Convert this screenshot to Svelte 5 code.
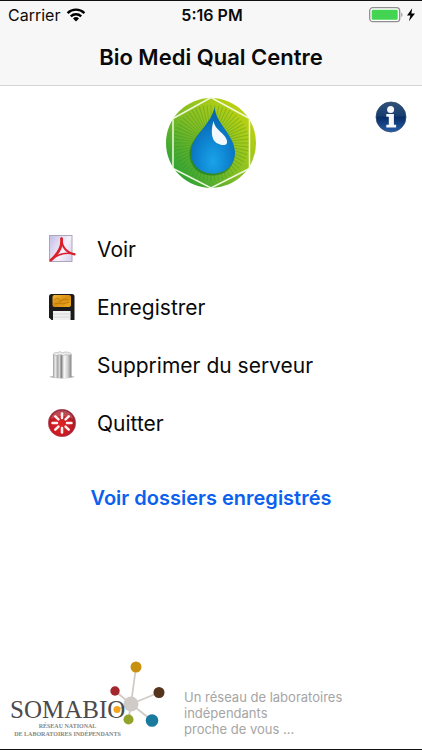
<script>
  const rays = Array.from({ length: 60 }, (_, i) => i * 6);
  const spokes = Array.from({ length: 8 }, (_, i) => i * 45);
  const items = [
    { id: 'pdf', label: 'Voir' },
    { id: 'save', label: 'Enregistrer' },
    { id: 'trash', label: 'Supprimer du serveur' },
    { id: 'quit', label: 'Quitter' }
  ];
</script>

<div class="app">
  <header>
    <div class="status">
      <div class="carrier">
        <span>Carrier</span>
        <svg width="20" height="14" viewBox="0 0 20 14" fill="none" stroke="#000" stroke-width="2.4" aria-hidden="true">
          <path d="M1.6 5.1a12 12 0 0 1 16.8 0" />
          <path d="M4.8 8.4a7.4 7.4 0 0 1 10.4 0" />
          <path d="M10 13.4l-3-3a4.3 4.3 0 0 1 6 0z" fill="#000" stroke="none" />
        </svg>
      </div>
      <time>5:16 PM</time>
      <div class="power">
        <svg width="47" height="16" viewBox="0 0 47 16" aria-hidden="true">
          <rect x="0.7" y="0.7" width="30" height="14" rx="3.2" fill="#fff" stroke="#8e8e8e" stroke-width="1.3" />
          <rect x="2.7" y="2.7" width="26" height="10" rx="1.2" fill="#43d551" />
          <path d="M32.3 5.2q2.4 2.5 0 5z" fill="#8e8e8e" />
          <path d="M43.2 1.2L38 8.4h3.4L39.9 14.2 46 6.6h-3.6z" fill="#000" />
        </svg>
      </div>
    </div>
    <h1>Bio Medi Qual Centre</h1>
  </header>

  <main>
    <div class="top">
      <svg class="logo" width="92" height="92" viewBox="0 0 92 92" role="img" aria-label="Bio Medi Qual">
        <defs>
          <linearGradient id="leaf" x1="0.1" y1="0.85" x2="0.85" y2="0.2">
            <stop offset="0" stop-color="#2ba136" />
            <stop offset="0.5" stop-color="#83bd24" />
            <stop offset="1" stop-color="#b9d012" />
          </linearGradient>
          <radialGradient id="water" cx="0.5" cy="0.82" r="0.65">
            <stop offset="0" stop-color="#1aa3ea" />
            <stop offset="0.5" stop-color="#0f86d2" />
            <stop offset="1" stop-color="#0868b4" />
          </radialGradient>
        </defs>
        <circle cx="46" cy="46" r="45" fill="url(#leaf)" />
        <g stroke="#268c2c" stroke-opacity="0.3" stroke-width="1">
          {#each rays as angle}
            <line x1="46" y1="46" x2="46" y2="8" transform="rotate({angle} 46 46)" />
          {/each}
        </g>
        <path d="M46 0.500L84.500 21.500V71.500L46 91L8 71.500V21.500z" fill="none" stroke="#effade" stroke-width="1.500" />
        <path d="M48.500 12c2 17 21 28 21 45 0 13-9 21.500-22 21.500S24.500 70 24.500 57c0-18 22-27 24-45z" fill="#187326" opacity="0.6" />
        <path d="M50 9.500C49 25 70 38 70 55.500 70 68 60 76.500 48 76.500S26 68 26 55.500C26 39 47 27 50 9.500z" fill="url(#water)" />
        <path d="M48.500 24c-3 10-2 19 3 22 4 2 8 3 10 1 2-3-1-8-6-12-4-4-6-6-7-11z" fill="#fff" opacity="0.95" />
      </svg>
      <button class="info" aria-label="Informations">
        <svg width="32" height="32" viewBox="0 0 32 32" aria-hidden="true">
          <defs>
            <linearGradient id="navy" x1="0" y1="0" x2="0" y2="1">
              <stop offset="0" stop-color="#325176" />
              <stop offset="0.46" stop-color="#173d70" />
              <stop offset="0.52" stop-color="#082d66" />
              <stop offset="1" stop-color="#2560aa" />
            </linearGradient>
          </defs>
          <circle cx="16" cy="16" r="15" fill="url(#navy)" stroke="#2b466c" stroke-width="0.800" />
          <circle cx="15.600" cy="8.600" r="3.500" fill="#f7f7f7" />
          <path d="M11.300 13h7.600v10.700h2.200v2.800h-9.800v-2.800h2.500v-7.900h-2.500z" fill="#f7f7f7" />
        </svg>
      </button>
    </div>

    <nav>
      {#each items as item}
        <button class="item">
          <svg width="28" height="28" viewBox="0 0 28 28" aria-hidden="true">
            {#if item.id === 'pdf'}
              <defs>
                <linearGradient id="page" x1="0" y1="0.2" x2="1" y2="0.8">
                  <stop offset="0" stop-color="#c9c3e9" />
                  <stop offset="0.6" stop-color="#f5f0fa" />
                  <stop offset="1" stop-color="#d9d3ee" />
                </linearGradient>
              </defs>
              <rect x="1.500" y="0.500" width="22.500" height="26" fill="url(#page)" stroke="#aaa6b9" />
              <g fill="none" stroke="#dc202b" stroke-linecap="round">
                <path d="M13.500 3.500C14.500 12 10 19 3 25" stroke-width="2.700" />
                <path d="M13.500 3.500C13.500 12 18 17 26.500 19.500" stroke-width="2" />
                <path d="M3 25C9 19.500 18 17 26.500 19" stroke-width="1.800" />
              </g>
            {:else if item.id === 'save'}
              <defs>
                <linearGradient id="label" x1="0" y1="0" x2="1" y2="1">
                  <stop offset="0" stop-color="#f2b735" />
                  <stop offset="0.5" stop-color="#d98e10" />
                  <stop offset="1" stop-color="#efae22" />
                </linearGradient>
              </defs>
              <path d="M3.500 1h20.500q2.500 0 2.500 2.500v23.500H3.500L1 24.500v-21Q1 1 3.500 1z" fill="#1c1a1b" />
              <rect x="4.500" y="2" width="18.500" height="12" rx="2" fill="url(#label)" />
              <path d="M6 7l4-2 2 3 4-2 5 1M6 11l5-1 4 1 6-2" fill="none" stroke="#ba750c" stroke-width="0.800" />
              <rect x="5" y="18" width="17.500" height="9" fill="#f1f1f1" />
              <path d="M5 21h17.500M5 24h17.500" stroke="#d6d6d6" />
            {:else if item.id === 'trash'}
              <defs>
                <linearGradient id="metal" x1="0" y1="0" x2="1" y2="0">
                  <stop offset="0" stop-color="#999" />
                  <stop offset="0.12" stop-color="#ededed" />
                  <stop offset="0.27" stop-color="#a2a2a2" />
                  <stop offset="0.34" stop-color="#e2e2e2" />
                  <stop offset="0.45" stop-color="#808080" />
                  <stop offset="0.6" stop-color="#fafafa" />
                  <stop offset="0.8" stop-color="#cfcfcf" />
                  <stop offset="1" stop-color="#848484" />
                </linearGradient>
              </defs>
              <ellipse cx="14" cy="25.800" rx="12.500" ry="1.600" fill="#aaa" opacity="0.7" />
              <path d="M5 3.500h18.500v22.500q-9 2.500-18.500 0z" fill="url(#metal)" />
              <path d="M5 3.500Q5.500 1 10 1.500l2-1 2 1.500 3-1q6 0 6.500 2.500l-3 .5-2-.5-3 1-4-1-3 1z" fill="#eee" stroke="#aaa" stroke-width="0.600" />
            {:else}
              <defs>
                <radialGradient id="ruby" cx="0.45" cy="0.6" r="0.6">
                  <stop offset="0" stop-color="#e32628" />
                  <stop offset="0.65" stop-color="#c41924" />
                  <stop offset="1" stop-color="#8c2331" />
                </radialGradient>
              </defs>
              <circle cx="14" cy="14" r="13.700" fill="url(#ruby)" stroke="#a74d5e" stroke-width="0.600" />
              <path d="M2.500 10a12 12 0 0 1 23 0q-11-6-23 0z" fill="#fff" opacity="0.2" />
              <g stroke="#fff1ef" stroke-width="2.500" stroke-linecap="round">
                {#each spokes as angle}
                  <line x1="14" y1="9" x2="14" y2="4.500" transform="rotate({angle} 14 14)" />
                {/each}
              </g>
            {/if}
          </svg>
          <span>{item.label}</span>
        </button>
      {/each}
    </nav>

    <a class="saved" href="#dossiers">Voir dossiers enregistrés</a>
  </main>

  <footer>
    <svg class="brand" width="160" height="84" viewBox="8 658 160 84" role="img" aria-label="Somabio">
      <g stroke="#d1cbc7" stroke-width="1.800">
        <path d="M131 704L136 667M131 704L115 691M131 704L159 692.500M131 704L152 720.500M131 704L128.500 719.500M131 704L117 709.500" />
      </g>
      <circle cx="131" cy="704" r="7.500" fill="#d1cbc7" />
      <circle cx="136" cy="667" r="5.500" fill="#c9900f" />
      <circle cx="115" cy="691" r="4.700" fill="#a3272b" />
      <circle cx="159" cy="692.500" r="5.500" fill="#55331d" />
      <circle cx="152" cy="720.500" r="6.300" fill="#187b9d" />
      <circle cx="128.500" cy="719.500" r="5" fill="#92a22b" />
      <circle cx="117" cy="709.500" r="3.500" fill="#f2a51d" />
      <g class="wordmark">
        <text class="name" x="10" y="718">SOMABIO</text>
        <text x="67.500" y="728" text-anchor="middle">RÉSEAU NATIONAL</text>
        <text x="67.500" y="736" text-anchor="middle">DE LABORATOIRES INDÉPENDANTS</text>
      </g>
    </svg>
    <p>Un réseau de laboratoires<br />indépendants<br />proche de vous ...</p>
  </footer>
</div>

<style>
  :global(body) {
    margin: 0;
    background: #fff;
  }
  .app {
    box-sizing: border-box;
    min-height: 100vh;
    display: flex;
    flex-direction: column;
    border-top: 1px solid #111;
    border-bottom: 1px solid #111;
    background: #fff;
    color: #0a0a0a;
    font-family: Inter, "Liberation Sans", sans-serif;
  }
  header {
    background: #f7f7f7;
    border-bottom: 1px solid #d5d5d5;
  }
  .status {
    display: grid;
    grid-template-columns: 1fr auto 1fr;
    align-items: center;
    height: 28px;
    padding: 0 6px 0 8px;
    font-size: 16px;
  }
  .carrier {
    display: flex;
    align-items: center;
    gap: 6px;
  }
  .status time {
    font-weight: 600;
  }
  .power {
    display: flex;
    justify-content: flex-end;
  }
  h1 {
    margin: 0;
    height: 56px;
    line-height: 56px;
    text-align: center;
    font-size: 22px;
    font-weight: 600;
  }
  svg {
    display: block;
    flex: none;
  }
  main {
    flex: 1;
    display: flex;
    flex-direction: column;
  }
  .top {
    display: grid;
    grid-template-columns: 1fr auto 1fr;
    padding: 11px 15px 0;
  }
  .logo {
    grid-column: 2;
  }
  button {
    border: 0;
    padding: 0;
    background: none;
    color: inherit;
    font-family: inherit;
    cursor: pointer;
  }
  .info {
    justify-self: end;
    align-self: start;
    margin-top: 4px;
  }
  nav {
    display: flex;
    flex-direction: column;
    padding: 31px 48px 0;
  }
  .item {
    display: flex;
    align-items: center;
    gap: 21px;
    height: 58px;
    font-size: 21px;
    text-align: left;
  }
  .saved {
    align-self: center;
    margin-top: 32px;
    line-height: 28px;
    font-size: 20px;
    font-weight: 600;
    color: #0b60ee;
    text-decoration: none;
  }
  footer {
    display: flex;
    align-items: flex-end;
    gap: 16px;
    padding: 0 8px 7px;
  }
  .wordmark {
    font-family: "Liberation Serif", serif;
    font-size: 6px;
    font-weight: 700;
    fill: #858585;
  }
  .name {
    font-size: 25px;
    font-weight: 400;
    fill: #4b4a4c;
  }
  footer p {
    margin: 0 0 5px;
    font-size: 13px;
    line-height: 16px;
    color: #a5a5a5;
  }
</style>
